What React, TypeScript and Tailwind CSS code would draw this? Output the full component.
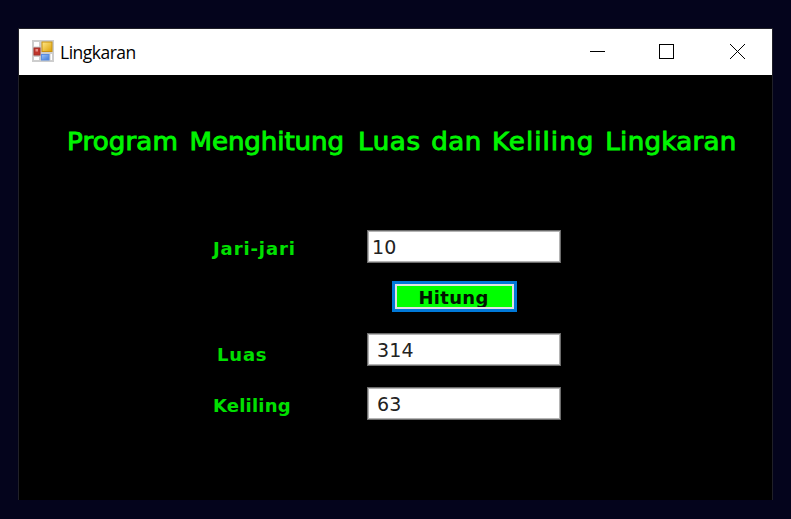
function FormIcon() {
  return (
    <svg width="22" height="22" viewBox="0 0 22 22" className="shrink-0">
      <defs>
        <linearGradient id="gold" x1="0" y1="0" x2="1" y2="1">
          <stop offset="0" stopColor="#ffe88a" />
          <stop offset="1" stopColor="#dda005" />
        </linearGradient>
        <linearGradient id="blue" x1="0" y1="0" x2="1" y2="1">
          <stop offset="0" stopColor="#9cc4fa" />
          <stop offset="1" stopColor="#3f78d6" />
        </linearGradient>
      </defs>
      <rect width="22" height="22" fill="#cdcdcd" />
      <rect x="2" y="2" width="5" height="4.5" fill="#fff" />
      <rect x="2" y="17" width="5" height="3" fill="#fff" />
      <rect x="18.5" y="14" width="1.5" height="6" fill="#fff" />
      <rect x="2" y="8" width="6" height="7" fill="#c1352b" stroke="#a3302a" />
      <rect x="3.5" y="9" width="2.5" height="2.5" fill="#e88f87" />
      <rect x="10" y="2" width="10" height="9.5" fill="url(#gold)" stroke="#c9920f" />
      <rect x="9.5" y="14.5" width="7.5" height="5.5" fill="url(#blue)" stroke="#5b8de0" />
    </svg>
  );
}

function TitleBar() {
  return (
    <header className="flex h-[46px] items-center bg-white pb-[2px] pl-[13px]">
      <FormIcon />
      <span className="ml-[6px] pt-[2px] font-['Open_Sans',sans-serif] text-[17.5px] leading-[24px] tracking-[-0.5px] text-black">
        Lingkaran
      </span>
      <div className="ml-auto flex h-[46px] items-center pt-[2px]" aria-label="Window controls">
        <svg width="209" height="46" viewBox="0 0 209 46" shapeRendering="crispEdges" fill="none" stroke="#000">
          <path d="M27 22.5h15" />
          <rect x="96.5" y="15.5" width="14" height="14" />
          <path d="M167 15l15 15M182 15l-15 15" shapeRendering="auto" />
        </svg>
      </div>
    </header>
  );
}

const labelClass =
  "whitespace-nowrap font-['DejaVu_Sans',sans-serif] font-bold text-[18px] leading-[24px] text-[#00e000]";
const boxClass =
  "h-[33px] w-[194px] border border-[#6c6c6c] bg-white font-['DejaVu_Sans',sans-serif] text-[19px] leading-[31px] text-[#222] tracking-[0.1px] outline-none shadow-[inset_0_0_0_1px_#b4b4b4]";

export default function App() {
  return (
    <div className="h-[519px] w-[791px] overflow-hidden bg-[#04041c] pl-[18px] pt-[28px]">
      <main className="h-[472px] w-[755px] border-x border-t border-[#202028] bg-black">
        <TitleBar />
        <h1 className="ml-[48px] mt-[51px] h-[32px] w-[680px] origin-left scale-x-[1.045] whitespace-nowrap font-['DejaVu_Sans',sans-serif] text-[25px] leading-[32px] text-[#00f500] [-webkit-text-stroke:0.9px_#00f500] [word-spacing:1.5px]">
          <span className="mr-[1.5px] tracking-[0.1px]">Program </span>
          <span className="mr-[4px] tracking-[-0.1px]">Menghitung </span>
          <span className="tracking-[0.6px]">Luas </span>
          <span className="tracking-[0.4px]">dan </span>
          <span className="tracking-[1px]">Keliling </span>
          <span className="tracking-[0.25px]">Lingkaran</span>
        </h1>
        <div className="ml-[194px] mt-[72px] flex h-[34px]">
          <label className={`${labelClass} w-[154px] pt-[7px] tracking-[0.9px]`}>Jari-jari</label>
          <input className={`${boxClass} pl-[4px]`} defaultValue="10" aria-label="Jari-jari" />
        </div>
        <button className="ml-[373px] mt-[17px] flex h-[31px] w-[125px] items-center justify-center border-[3px] border-[#0078d7] bg-[#00ff00] pt-px pr-[2px] font-['DejaVu_Sans',sans-serif] text-[18px] font-bold tracking-[0.3px] text-[#001400] outline-2 -outline-offset-[5px] outline-[#e1e1e1]">
          Hitung
        </button>
        <div className="ml-[198px] mt-[21px] flex h-[34px]">
          <label className={`${labelClass} w-[150px] pt-[10px] tracking-[0.8px]`}>Luas</label>
          <input className={`${boxClass} pl-[9px]`} defaultValue="314" aria-label="Luas" />
        </div>
        <div className="ml-[194px] mt-[20px] flex h-[34px]">
          <label className={`${labelClass} w-[154px] pt-[7px] tracking-[0.2px]`}>Keliling</label>
          <input className={`${boxClass} pl-[9px]`} defaultValue="63" aria-label="Keliling" />
        </div>
      </main>
    </div>
  );
}
